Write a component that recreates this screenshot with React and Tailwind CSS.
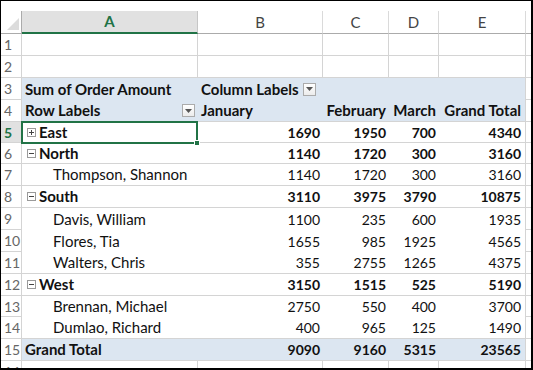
import React from "react";

const rows = [
  { n: 1, h: 22, kind: "grid" },
  { n: 2, h: 22, kind: "grid" },
  { n: 3, h: 22, kind: "head3", line: "none" },
  { n: 4, h: 22, kind: "head4", line: "blue" },
  { n: 5, h: 21, kind: "region", label: "East", open: false, v: [1690, 1950, 700, 4340], line: "blue", sel: true },
  { n: 6, h: 21, kind: "region", label: "North", open: true, v: [1140, 1720, 300, 3160], line: "blue" },
  { n: 7, h: 22, kind: "item", label: "Thompson, Shannon", v: [1140, 1720, 300, 3160], line: "blue" },
  { n: 8, h: 22, kind: "region", label: "South", open: true, v: [3110, 3975, 3790, 10875], line: "blue" },
  { n: 9, h: 22, kind: "item", label: "Davis, William", v: [1100, 235, 600, 1935], line: "none" },
  { n: 10, h: 22, kind: "item", label: "Flores, Tia", v: [1655, 985, 1925, 4565], line: "none" },
  { n: 11, h: 22, kind: "item", label: "Walters, Chris", v: [355, 2755, 1265, 4375], line: "blue" },
  { n: 12, h: 22, kind: "region", label: "West", open: true, v: [3150, 1515, 525, 5190], line: "blue" },
  { n: 13, h: 21, kind: "item", label: "Brennan, Michael", v: [2750, 550, 400, 3700], line: "none" },
  { n: 14, h: 22, kind: "item", label: "Dumlao, Richard", v: [400, 965, 125, 1490], line: "blue" },
  { n: 15, h: 22, kind: "total", label: "Grand Total", v: [9090, 9160, 5315, 23565], line: "gray" },
];

function Toggle({ open }) {
  return (
    <svg width="9" height="9" viewBox="0 0 9 9" className="mr-[3px] shrink-0">
      <rect x="0.5" y="0.5" width="8" height="8" fill="#fff" stroke="#9a9a9a" />
      <line x1="2" y1="4.5" x2="7" y2="4.5" stroke="#444" />
      {!open && <line x1="4.5" y1="2" x2="4.5" y2="7" stroke="#444" />}
    </svg>
  );
}

function Filter() {
  return (
    <span className="flex h-[13px] w-[13px] shrink-0 items-center justify-center border border-[#ababab] bg-gradient-to-b from-white to-[#ececec]">
      <svg width="7" height="4" viewBox="0 0 7 4">
        <path d="M0 0h7L3.5 4z" fill="#555" />
      </svg>
    </span>
  );
}

function RowNum({ r }) {
  const sel = r.sel;
  return (
    <div
      className={
        "flex w-[21px] shrink-0 items-center border-r border-b border-[#d4d4d4] pl-[3px] text-[14px] " +
        (sel ? "bg-[#e1e1e1] font-bold text-[#217346]" : "bg-white text-[#666]")
      }
    >
      {r.n}
    </div>
  );
}

function GridRow({ r }) {
  return (
    <div className={"flex " + (r.h === 21 ? "h-[21px]" : "h-[22px]")}>
      <RowNum r={r} />
      <div className="w-[176px] shrink-0 border-r border-b border-[#d4d4d4]" />
      <div className="w-[125px] shrink-0 border-r border-b border-[#d4d4d4]" />
      <div className="w-[66px] shrink-0 border-r border-b border-[#d4d4d4]" />
      <div className="w-[50px] shrink-0 border-r border-b border-[#d4d4d4]" />
      <div className="w-[87px] shrink-0 border-r border-b border-[#d4d4d4]" />
      <div className="flex-1 border-b border-[#d4d4d4]" />
    </div>
  );
}

function PivotRow({ r }) {
  const bold = r.kind === "region" || r.kind === "total" || r.kind === "head3" || r.kind === "head4";
  const fill = r.kind === "head3" || r.kind === "head4" || r.kind === "total" ? "bg-[#dce6f1]" : "bg-white";
  const line =
    r.line === "blue" ? "border-b border-[#a9c1de]" : r.line === "gray" ? "border-b border-[#d4d4d4]" : "";
  const num = "flex items-center justify-end pr-[3px]";

  return (
    <div className={"flex " + (r.h === 21 ? "h-[21px]" : "h-[22px]")}>
      <RowNum r={r} />
      <div
        className={
          "flex w-[504px] shrink-0 border-r border-[#d4d4d4] text-[15px] text-[#111] " +
          fill + " " + line + " " + (bold ? "font-bold" : "")
        }
      >
        <div className="relative flex w-[176px] shrink-0 items-center">
          {r.kind === "head3" && <span className="pl-[3px]">Sum of Order Amount</span>}
          {r.kind === "head4" && (
            <div className="flex w-full items-center justify-between pl-[3px] pr-[3px]">
              <span>Row Labels</span>
              <Filter />
            </div>
          )}
          {r.kind === "region" && (
            <div className="flex items-center pl-[5px]">
              <Toggle open={r.open} />
              <span>{r.label}</span>
            </div>
          )}
          {r.kind === "item" && <span className="pl-[31px]">{r.label}</span>}
          {r.kind === "total" && <span className="pl-[3px]">{r.label}</span>}
          {r.sel && (
            <div className="absolute -left-[1px] -top-[1px] h-[23px] w-[177px] border-2 border-[#217346]">
              <div className="absolute -bottom-[4px] -right-[4px] h-[6px] w-[6px] border border-white bg-[#217346]" />
            </div>
          )}
        </div>
        {r.kind === "head3" && (
          <div className="flex w-[328px] items-center gap-[5px] pl-[3px]">
            <span>Column Labels</span>
            <Filter />
          </div>
        )}
        {r.kind === "head4" && (
          <>
            <div className="flex w-[125px] items-center pl-[3px]">January</div>
            <div className={"w-[66px] " + num}>February</div>
            <div className={"w-[50px] " + num}>March</div>
            <div className={"w-[86px] pr-[4px] " + num}>Grand Total</div>
          </>
        )}
        {r.v && (
          <>
            <div className={"w-[125px] text-[14px] " + num}>{r.v[0]}</div>
            <div className={"w-[66px] text-[14px] " + num}>{r.v[1]}</div>
            <div className={"w-[50px] text-[14px] " + num}>{r.v[2]}</div>
            <div className={"w-[86px] pr-[4px] text-[14px] " + num}>{r.v[3]}</div>
          </>
        )}
      </div>
      <div className="flex-1 border-b border-[#d4d4d4]" />
    </div>
  );
}

export default function App() {
  const cols = [
    { l: "B", w: "w-[125px]" },
    { l: "C", w: "w-[66px]" },
    { l: "D", w: "w-[50px]" },
    { l: "E", w: "w-[87px]" },
  ];
  return (
    <div className="h-[370px] w-[533px] overflow-hidden border-t border-l border-r-2 border-b-2 border-black bg-white font-['Lato',sans-serif]">
      <div className="h-[10px]" />
      <div className="flex h-[23px] text-[15px]">
        <div className="relative w-[21px] shrink-0 border-r border-b border-[#ababab]">
          <svg width="12" height="12" viewBox="0 0 12 12" className="absolute bottom-[3px] right-[2px]">
            <path d="M12 0V12H0z" fill="#dcdcdc" />
          </svg>
        </div>
        <div className="flex w-[176px] shrink-0 items-center justify-center border-r border-b-2 border-r-[#c6c6c6] border-b-[#217346] bg-[#e1e1e1] font-bold text-[#217346]">
          A
        </div>
        {cols.map((c) => (
          <div
            key={c.l}
            className={c.w + " flex shrink-0 items-center justify-center border-r border-b border-r-[#dadada] border-b-[#ababab] text-[#444]"}
          >
            {c.l}
          </div>
        ))}
        <div className="flex-1 border-b border-[#ababab]" />
      </div>
      {rows.map((r) => (r.kind === "grid" ? <GridRow key={r.n} r={r} /> : <PivotRow key={r.n} r={r} />))}
      <GridRow r={{ n: 16, h: 22 }} />
    </div>
  );
}
